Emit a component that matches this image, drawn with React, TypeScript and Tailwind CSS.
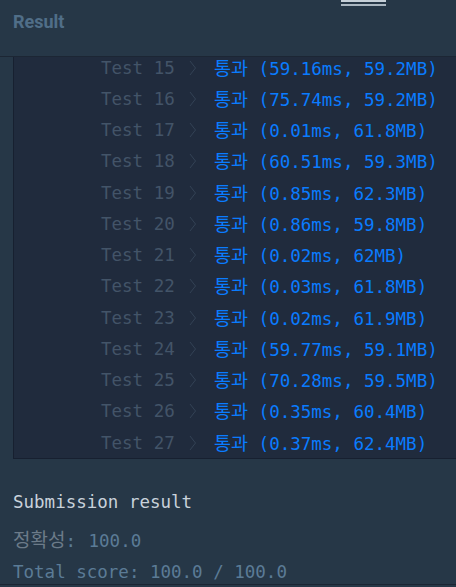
import React from "react";

const rows: [number, string][] = [
  [15, "(59.16ms, 59.2MB)"],
  [16, "(75.74ms, 59.2MB)"],
  [17, "(0.01ms, 61.8MB)"],
  [18, "(60.51ms, 59.3MB)"],
  [19, "(0.85ms, 62.3MB)"],
  [20, "(0.86ms, 59.8MB)"],
  [21, "(0.02ms, 62MB)"],
  [22, "(0.03ms, 61.8MB)"],
  [23, "(0.02ms, 61.9MB)"],
  [24, "(59.77ms, 59.1MB)"],
  [25, "(70.28ms, 59.5MB)"],
  [26, "(0.35ms, 60.4MB)"],
  [27, "(0.37ms, 62.4MB)"],
];

const mono = "font-['DejaVu_Sans_Mono','Noto_Sans_CJK_KR',monospace]";

export default function App() {
  return (
    <div className="relative w-[456px] h-[587px] bg-[#263747] flex flex-col overflow-hidden">
      <div className="absolute top-0 left-[341px] w-[45px] flex flex-col">
        <div className="h-[2px] bg-[#c5cfd8]" />
        <div className="h-[2px] mt-[2px] bg-[#aab6c1]" />
      </div>
      <div className="h-[56px] shrink-0 px-[13px] pt-[8px]">
        <span className="font-['Roboto',sans-serif] font-bold text-[18px] text-[#506e88]">Result</span>
      </div>
      <div className="h-px bg-[#1c2634] shrink-0" />
      <div className="flex shrink-0">
        <div className="w-[13px]" />
        <div className="flex-1 h-[402px] bg-[#202b3d] border-l border-b border-[#172030] overflow-hidden">
          <div className={`-mt-[5px] ${mono} text-[17.5px]`}>
            {rows.map(([n, r]) => (
              <div key={n} className="h-[31.25px] grid grid-cols-[87px_87px_26px_1fr] items-center">
                <div />
                <span className="text-[#435468] whitespace-nowrap">Test {n}</span>
                <svg width="8" height="16" viewBox="0 0 8 16" className="ml-px">
                  <polyline points="1,1 6.5,8 1,15" fill="none" stroke="#334255" strokeWidth="1" />
                </svg>
                <span className="text-[#0a7cff] whitespace-nowrap">
                  <span className="font-['Noto_Sans_CJK_KR',sans-serif] text-[18.5px]">통과</span> {r}
                </span>
              </div>
            ))}
          </div>
        </div>
      </div>
      <div className={`px-[13px] pt-[31px] ${mono} text-[17.5px] leading-[24px]`}>
        <div className="text-[#c9d2db]">Submission result</div>
        <div className="mt-[13px] text-[#5b7b96] whitespace-pre">
          <span className="font-['Noto_Sans_CJK_KR',sans-serif] text-[#6c7b89] text-[19px]">정확성</span>{": "}<span className="ml-[2px]">100.0</span>
        </div>
        <div className="mt-[7px] text-[#5b7b96]">Total score: 100.0 / 100.0</div>
      </div>
      <div className="absolute left-0 right-0 top-[584px] h-px bg-[#1b2532]" />
    </div>
  );
}
